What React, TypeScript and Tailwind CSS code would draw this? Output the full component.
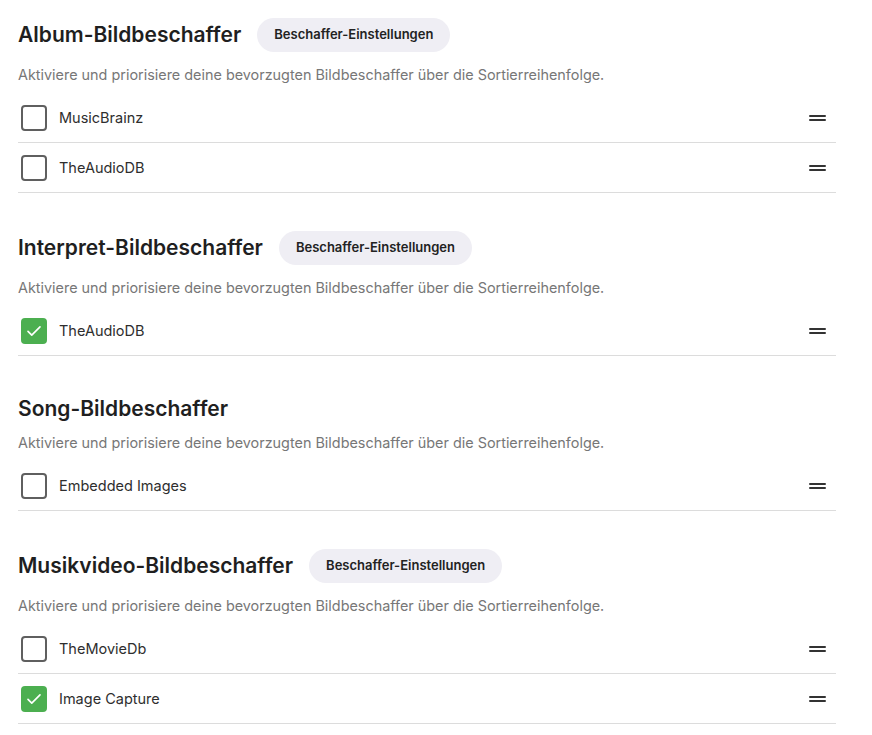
import React from "react";

type Fetcher = { name: string; enabled: boolean };
type Section = { title: string; settings: boolean; fetchers: Fetcher[] };

const sections: Section[] = [
  {
    title: "Album-Bildbeschaffer",
    settings: true,
    fetchers: [
      { name: "MusicBrainz", enabled: false },
      { name: "TheAudioDB", enabled: false },
    ],
  },
  {
    title: "Interpret-Bildbeschaffer",
    settings: true,
    fetchers: [{ name: "TheAudioDB", enabled: true }],
  },
  {
    title: "Song-Bildbeschaffer",
    settings: false,
    fetchers: [{ name: "Embedded Images", enabled: false }],
  },
  {
    title: "Musikvideo-Bildbeschaffer",
    settings: true,
    fetchers: [
      { name: "TheMovieDb", enabled: false },
      { name: "Image Capture", enabled: true },
    ],
  },
];

function Checkbox({ checked }: { checked: boolean }) {
  if (checked) {
    return (
      <div className="flex h-[26px] w-[26px] items-center justify-center rounded-[4px] bg-[#4caf50]">
        <svg width="18" height="18" viewBox="0 0 24 24" fill="none">
          <path d="M4 12.5l5 5L20 6.5" stroke="white" strokeWidth="2.2" strokeLinecap="round" strokeLinejoin="round" />
        </svg>
      </div>
    );
  }
  return <div className="h-[26px] w-[26px] rounded-[4px] border-2 border-[#5f5f5f] bg-white" />;
}

function DragHandle() {
  return (
    <div className="flex w-[17px] flex-col gap-[2px]">
      <div className="h-[2px] w-full rounded-full bg-[#333]" />
      <div className="h-[2px] w-full rounded-full bg-[#333]" />
    </div>
  );
}

export default function App() {
  return (
    <div className="min-h-screen bg-white pl-[18px] pt-[18px] text-[#222]" style={{ fontFamily: "Inter, 'Noto Sans', sans-serif" }}>
      <div className="w-[818px]">
        {sections.map((s, i) => (
          <section key={s.title} className={i === 0 ? "" : s.settings ? "mt-[38px]" : "mt-[37px]"}>
            <div className={`flex items-center gap-4 ${s.settings ? "h-[34px] mb-[13px]" : "h-8 mb-[8px]"}`}>
              <h2 className="text-[21px] font-semibold leading-7 text-[#1f1f1f]">{s.title}</h2>
              {s.settings && (
                <button className="h-[34px] rounded-full bg-[#efeef4] px-[17px] text-[13px] font-semibold text-[#222]">
                  Beschaffer-Einstellungen
                </button>
              )}
            </div>
            <p className="text-[14.4px] leading-5 text-[#777]">
              Aktiviere und priorisiere deine bevorzugten Bildbeschaffer über die Sortierreihenfolge.
            </p>
            <ul className="mt-[8px]">
              {s.fetchers.map((f) => (
                <li key={f.name} className="flex h-[50px] items-center border-b border-[#dcdcdc] pl-[3px] pr-[10px]">
                  <Checkbox checked={f.enabled} />
                  <span className="ml-3 flex-1 text-[14.5px] text-[#2e2e2e]">{f.name}</span>
                  <DragHandle />
                </li>
              ))}
            </ul>
          </section>
        ))}
      </div>
    </div>
  );
}
